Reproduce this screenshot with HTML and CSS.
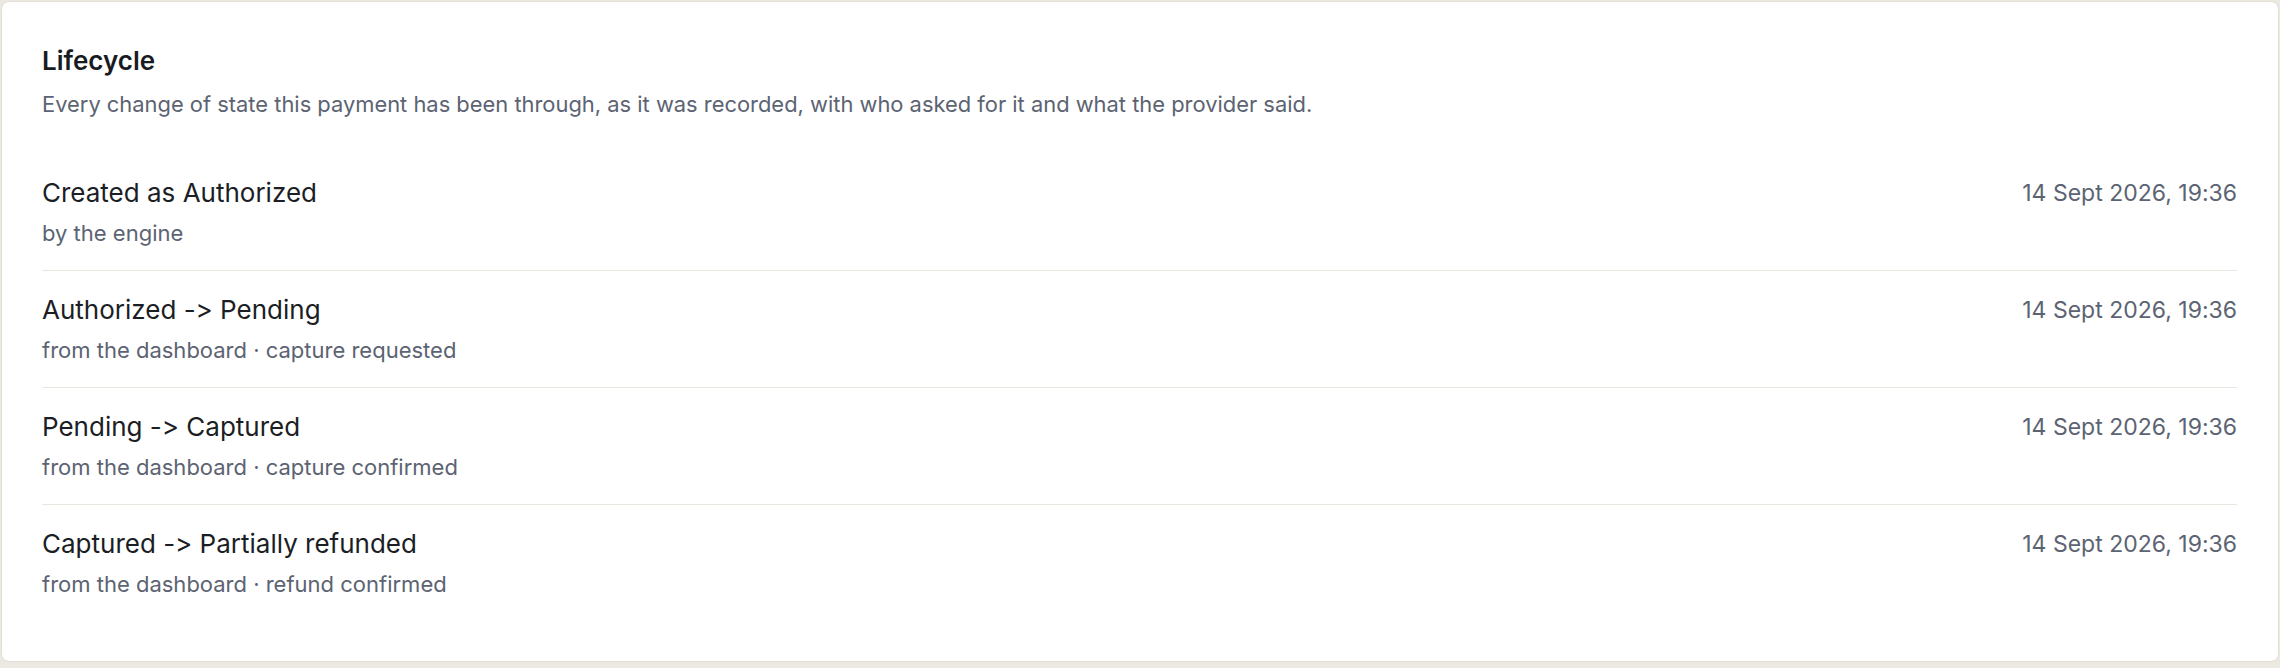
FILE: index.html
```html
<!DOCTYPE html>
<html lang="en">
<head>
    <meta charset="UTF-8" />
    <meta name="viewport" content="width=device-width, initial-scale=1" />
    <title>Payment lifecycle</title>
    <link rel="stylesheet" href="styles.css">
</head>
<body>

    <section class="card">
        <h2 class="card-title">Lifecycle</h2>
        <p class="card-desc">Every change of state this payment has been through, as it was recorded, with who asked for it and what the provider said.</p>

        <ul class="events">
            <li class="event">
                <div class="event-main">
                    <div class="event-title">Created as Authorized</div>
                    <div class="event-meta">by the engine</div>
                </div>
                <div class="event-time">14 Sept 2026, 19:36</div>
            </li>
            <li class="event">
                <div class="event-main">
                    <div class="event-title">Authorized -&gt; Pending</div>
                    <div class="event-meta">from the dashboard · capture requested</div>
                </div>
                <div class="event-time">14 Sept 2026, 19:36</div>
            </li>
            <li class="event">
                <div class="event-main">
                    <div class="event-title">Pending -&gt; Captured</div>
                    <div class="event-meta">from the dashboard · capture confirmed</div>
                </div>
                <div class="event-time">14 Sept 2026, 19:36</div>
            </li>
            <li class="event">
                <div class="event-main">
                    <div class="event-title">Captured -&gt; Partially refunded</div>
                    <div class="event-meta">from the dashboard · refund confirmed</div>
                </div>
                <div class="event-time">14 Sept 2026, 19:36</div>
            </li>
        </ul>
    </section>

</body>
</html>
```

FILE: styles.css
```css
body { margin: 0; padding: 1px; background: #ebe9e1; font-family: Inter, "Liberation Sans", sans-serif; font-feature-settings: "calt" 0, "liga" 0; color: #1b1e25; }
.card { background: #fff; border: 1px solid #e2dfd4; border-radius: 8px; padding: 42px 41px 40px 40px; }
.card-title { margin: 0; font-size: 26px; line-height: 34px; font-weight: 600; color: #181b21; }
.card-desc { margin: 10px 0 0; font-size: 21.9px; line-height: 32px; color: #5c6372; }
.events { list-style: none; margin: 34px 0 0; padding: 0; }
.event { display: flex; justify-content: space-between; align-items: flex-start; padding: 23px 0 22px; border-bottom: 1px solid #e8e6df; }
.event:last-child { border-bottom: none; }
.event-title { font-size: 26px; line-height: 32px; color: #1b1e25; }
.event-meta { margin-top: 9px; font-size: 22px; line-height: 30px; color: #5c6372; }
.event-time { font-size: 23px; line-height: 32px; color: #5c6372; white-space: nowrap; }
```
